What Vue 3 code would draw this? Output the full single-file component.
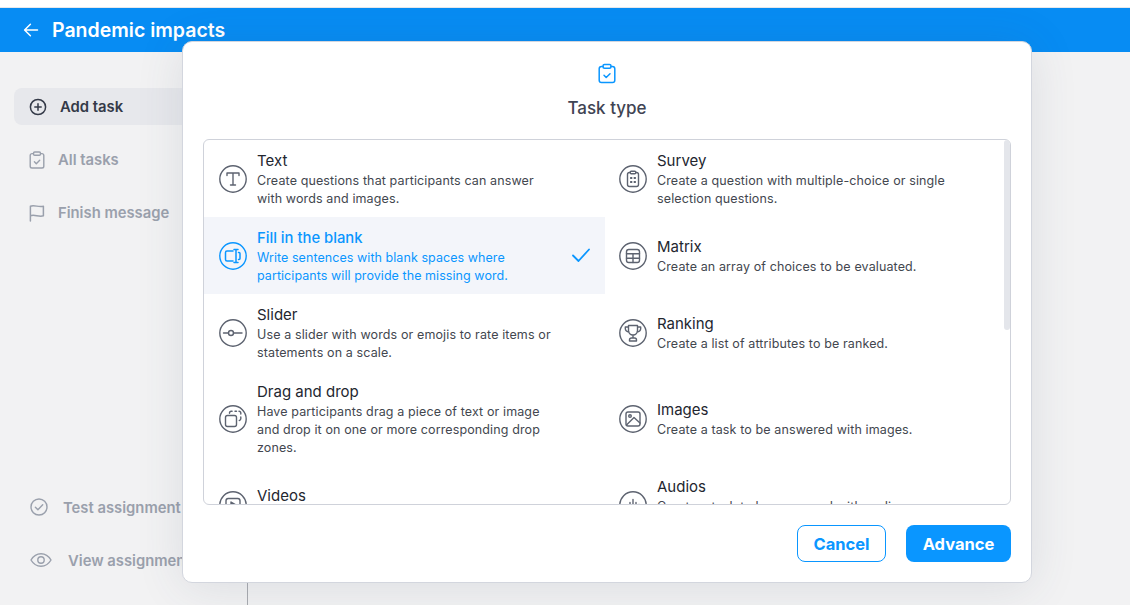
<script setup>
const items = [
  { key: 'text', title: 'Text', lines: ['Create questions that participants can answer', 'with words and images.'] },
  { key: 'fill', title: 'Fill in the blank', lines: ['Write sentences with blank spaces where', 'participants will provide the missing word.'], active: true },
  { key: 'slider', title: 'Slider', lines: ['Use a slider with words or emojis to rate items or', 'statements on a scale.'] },
  { key: 'drag', title: 'Drag and drop', lines: ['Have participants drag a piece of text or image', 'and drop it on one or more corresponding drop', 'zones.'] },
  { key: 'video', title: 'Videos', lines: ['Create a task to be answered with videos.'] },
  { key: 'survey', title: 'Survey', lines: ['Create a question with multiple-choice or single', 'selection questions.'] },
  { key: 'matrix', title: 'Matrix', lines: ['Create an array of choices to be evaluated.'] },
  { key: 'ranking', title: 'Ranking', lines: ['Create a list of attributes to be ranked.'] },
  { key: 'images', title: 'Images', lines: ['Create a task to be answered with images.'] },
  { key: 'audio', title: 'Audios', lines: ['Create a task to be answered with audio.', 'Upload or record.'] },
]
</script>

<template>
  <div class="page">
    <div class="topstrip"></div>
    <header class="bar">
      <svg class="back" viewBox="0 0 16 16" width="16" height="16" fill="none" stroke="#fff" stroke-width="1.5" stroke-linecap="round" stroke-linejoin="round"><path d="M14.5 8H1.8M7.4 2.200 1.600 8l5.800 5.800"/></svg>
      <span class="bar-title">Pandemic impacts</span>
    </header>
    <div class="body">
      <aside class="side">
        <div class="nav-top">
          <div class="nav nav-on">
            <svg viewBox="0 0 18 18" width="18" height="18" fill="none" stroke="#343a48" stroke-width="1.5" stroke-linecap="round"><circle cx="9" cy="9" r="7.600"/><path d="M9 5.800v6.400M5.800 9h6.400"/></svg>
            <span>Add task</span>
          </div>
          <div class="nav">
            <svg viewBox="0 0 16 18" width="16" height="18" fill="none" stroke="#9aa0ac" stroke-width="1.4" stroke-linecap="round" stroke-linejoin="round"><path d="M4.500 2.600H3A1.800 1.800 0 0 0 1.200 4.400v10.800A1.800 1.800 0 0 0 3 17h10a1.800 1.800 0 0 0 1.800-1.800V4.400A1.800 1.800 0 0 0 13 2.600h-1.500"/><rect x="4.500" y="1" width="7" height="3.200" rx="1.200"/><path d="m5.400 10.800 1.900 1.900 3.400-3.400"/></svg>
            <span>All tasks</span>
          </div>
          <div class="nav">
            <svg viewBox="0 0 16 18" width="16" height="18" fill="none" stroke="#9aa0ac" stroke-width="1.5" stroke-linecap="round" stroke-linejoin="round"><path d="M1.400 17V2.200c4-1.800 8.500 1.600 13 0v9.600c-4.500 1.600-9-1.800-13 0"/></svg>
            <span>Finish message</span>
          </div>
        </div>
        <div class="nav-bottom">
          <div class="nav nav-test">
            <svg viewBox="0 0 18 18" width="18" height="18" fill="none" stroke="#9aa0ac" stroke-width="1.4" stroke-linecap="round" stroke-linejoin="round"><circle cx="9" cy="9" r="8"/><path d="m5.400 9.300 2.500 2.500 4.800-5"/></svg>
            <span>Test assignment</span>
          </div>
          <div class="nav nav-view">
            <svg viewBox="0 0 22 16" width="22" height="16" fill="none" stroke="#9aa0ac" stroke-width="1.4" stroke-linecap="round" stroke-linejoin="round"><path d="M1 8c2.500-4.200 6-6.300 10-6.300S18.500 3.800 21 8c-2.500 4.200-6 6.300-10 6.300S3.500 12.200 1 8Z"/><circle cx="11" cy="8" r="3.200"/></svg>
            <span>View assignment</span>
          </div>
        </div>
      </aside>
    </div>

    <section class="modal">
      <svg class="modal-icon" viewBox="0 0 18 20" width="18" height="21" fill="none" stroke="#0a96ff" stroke-width="1.500" stroke-linecap="round" stroke-linejoin="round"><path d="M5 3H3.500A2.300 2.300 0 0 0 1.200 5.300v11.400A2.300 2.300 0 0 0 3.500 19h11a2.300 2.300 0 0 0 2.300-2.300V5.300A2.300 2.300 0 0 0 14.500 3H13"/><rect x="5" y="1" width="8" height="3.800" rx="1.500"/><path d="m6 11.800 2.200 2.200L12 10.300"/></svg>
      <h2 class="modal-title">Task type</h2>
      <div class="list">
        <div class="grid">
          <div v-for="it in items" :key="it.key" class="item" :class="{ on: it.active }">
            <span class="ic">
              <svg viewBox="0 0 28 28" width="28" height="28" fill="none" stroke="currentColor" stroke-width="1.400" stroke-linecap="round" stroke-linejoin="round">
                <circle cx="14" cy="14" r="13.200"/>
                <template v-if="it.key === 'text'"><path d="M8 10.500V8h12v2.500M14 8v12M11.500 20h5"/></template>
                <template v-else-if="it.key === 'fill'"><path d="M14 9H8a1.500 1.500 0 0 0-1.500 1.500v7A1.500 1.500 0 0 0 8 19h6M17 7.500v13M15 7.500h4M15 20.500h4M19.500 10.500h.5a1 1 0 0 1 1 1v5a1 1 0 0 1-1 1h-.5" stroke-width="1.500"/></template>
                <template v-else-if="it.key === 'slider'"><circle cx="12" cy="14" r="2.500"/><path d="M4.500 14h5M14.500 14h8.500"/></template>
                <template v-else-if="it.key === 'drag'"><rect x="6.500" y="10.500" width="11" height="11" rx="2"/><path d="M10.500 8.300V8a1.800 1.800 0 0 1 1.800-1.800h.8M16 6.200h1.500M20 6.200a1.800 1.800 0 0 1 1.800 1.800v1M21.800 12v1.800a1.800 1.800 0 0 1-1.500 1.700"/></template>
                <template v-else-if="it.key === 'video'"><rect x="7" y="7.500" width="14" height="13" rx="2.200"/><path d="m12 11 5 3-5 3z"/></template>
                <template v-else-if="it.key === 'survey'"><path d="M11.200 7.500h-.7A2 2 0 0 0 8.500 9.500v10a2 2 0 0 0 2 2h7a2 2 0 0 0 2-2v-10a2 2 0 0 0-2-2h-.7"/><rect x="11.200" y="6.200" width="5.600" height="2.600" rx="1"/><path d="M11.800 13h.8M15.400 13h.8M11.800 17h.8M15.400 17h.8" stroke-width="1.800"/></template>
                <template v-else-if="it.key === 'matrix'"><rect x="7.500" y="7.500" width="13" height="13" rx="2.200"/><path d="M7.500 11.800h13M7.500 16.200h13M14 11.800v8.700"/></template>
                <template v-else-if="it.key === 'ranking'"><path d="M9.500 6.500h9v5a4.500 4.500 0 0 1-9 0zM9.500 8H6.300v1.500a3.500 3.500 0 0 0 3.700 3.500M18.500 8h3.200v1.500a3.500 3.500 0 0 1-3.700 3.500M14 16v3M10.500 22v-1a2 2 0 0 1 2-2h3a2 2 0 0 1 2 2v1z"/></template>
                <template v-else-if="it.key === 'images'"><rect x="7" y="7" width="14" height="14" rx="2"/><circle cx="11" cy="11" r="1.300"/><path d="m7.500 20 7.500-7.500 6 5.500"/></template>
                <template v-else><path d="M8 14.500v3.500M11 11.500V19M14 8.500V21M17 11.500V19M20 13.500v4"/></template>
              </svg>
            </span>
            <div class="copy">
              <div class="t">{{ it.title }}</div>
              <div v-for="l in it.lines" :key="l" class="d">{{ l }}</div>
            </div>
            <svg v-if="it.active" class="tick" viewBox="0 0 20 16" width="20" height="16" fill="none" stroke="#0a96ff" stroke-width="1.800" stroke-linecap="round" stroke-linejoin="round"><path d="m2 8.500 5.500 5.500L18 2.500"/></svg>
          </div>
        </div>
        <div class="thumb"></div>
      </div>
      <footer class="foot">
        <button class="btn ghost">Cancel</button>
        <button class="btn solid">Advance</button>
      </footer>
    </section>
  </div>
</template>

<style>
html, body { margin: 0; background: #f2f2f3; }
</style>

<style scoped>
.page {
  position: relative;
  width: 1130px;
  height: 605px;
  overflow: hidden;
  background: #f2f2f3;
  font-family: Inter, "Open Sans", sans-serif;
  display: flex;
  flex-direction: column;
}
.topstrip { height: 8px; background: #fff; box-shadow: inset 0 -1px 0 #e6e8ec; flex: none; }
.bar {
  flex: none;
  height: 44px;
  background: #078cf3;
  display: flex;
  align-items: center;
  padding-left: 23px;
  gap: 13px;
  color: #fff;
}
.bar-title { font-size: 19.5px; font-weight: 600; }
.body { flex: 1; display: flex; min-height: 0; }
.side {
  width: 248px;
  box-sizing: border-box;
  border-right: 1px solid #a9abb0;
  display: flex;
  flex-direction: column;
  justify-content: space-between;
  padding: 36px 0 27px 14px;
}
.nav-top { display: flex; flex-direction: column; gap: 16px; }
.nav-bottom { display: flex; flex-direction: column; gap: 16px; }
.nav {
  display: flex;
  align-items: center;
  height: 37px;
  padding-left: 15px;
  gap: 13px;
  font-size: 14.8px;
  font-weight: 600;
  color: #9aa0ac;
  white-space: nowrap;
  width: 233px;
  box-sizing: border-box;
  border-radius: 8px;
}
.nav-on { background: #e7e8ec; color: #343a48; gap: 13px; }
.nav-test { padding-left: 16px; gap: 15px; }
.nav-view { padding-left: 16px; gap: 16px; }
.nav-test span, .nav-view span { padding-top: 2px; }

.modal {
  position: absolute;
  left: 182px;
  top: 41px;
  width: 850px;
  height: 542px;
  box-sizing: border-box;
  background: #fff;
  border: 1px solid #d3d6de;
  border-radius: 10px;
  box-shadow: 0 4px 48px rgba(60, 70, 100, 0.12);
  display: flex;
  flex-direction: column;
  align-items: center;
  padding: 0 20px;
}
.modal-icon { margin-top: 21px; flex: none; }
.modal-title {
  margin: 13px 0 0;
  font-size: 17px;
  line-height: 22px;
  font-weight: 500;
  color: #3f4453;
}
.list {
  position: relative;
  margin-top: 20px;
  width: 808px;
  height: 366px;
  flex: none;
  box-sizing: border-box;
  border: 1px solid #cfd2da;
  border-radius: 6px;
  overflow: hidden;
}
.grid {
  display: grid;
  grid-auto-flow: column;
  grid-template-columns: 401px 1fr;
  grid-template-rows: 77px 77px 77px 95px 77px;
}
.item {
  display: flex;
  align-items: center;
  padding-left: 15px;
  gap: 10px;
  box-sizing: border-box;
  position: relative;
}
.item:nth-child(n + 6) { padding-left: 14px; }
.item.on { background: #f3f5fa; }
.ic { color: #5d6370; display: flex; flex: none; }
.on .ic { color: #0a96ff; }
.copy { white-space: nowrap; padding-top: 2px; }
.t { font-size: 15px; line-height: 18px; margin-bottom: 2px; color: #23262f; }
.d { font-size: 12.5px; line-height: 18px; letter-spacing: 0.12px; color: #43474f; }
.on .t { color: #0a96ff; font-weight: 500; font-size: 14.8px; }
.on .d { color: #0a96ff; letter-spacing: 0.06px; }
.tick { position: absolute; right: 14px; top: 30px; }
.thumb {
  position: absolute;
  right: 0;
  top: 0;
  width: 6px;
  height: 190px;
  background: #e4e6eb;
  border-radius: 3px;
}
.foot {
  margin-top: 20px;
  align-self: flex-end;
  display: flex;
  gap: 20px;
}
.btn {
  height: 37px;
  border-radius: 8px;
  font: 700 16.5px Inter, sans-serif;
  padding: 0;
  box-sizing: border-box;
}
.ghost { width: 89px; background: #fff; color: #0a96ff; border: 1px solid #0a96ff; }
.solid { width: 105px; background: #0a96ff; color: #fff; border: 0; }
</style>
